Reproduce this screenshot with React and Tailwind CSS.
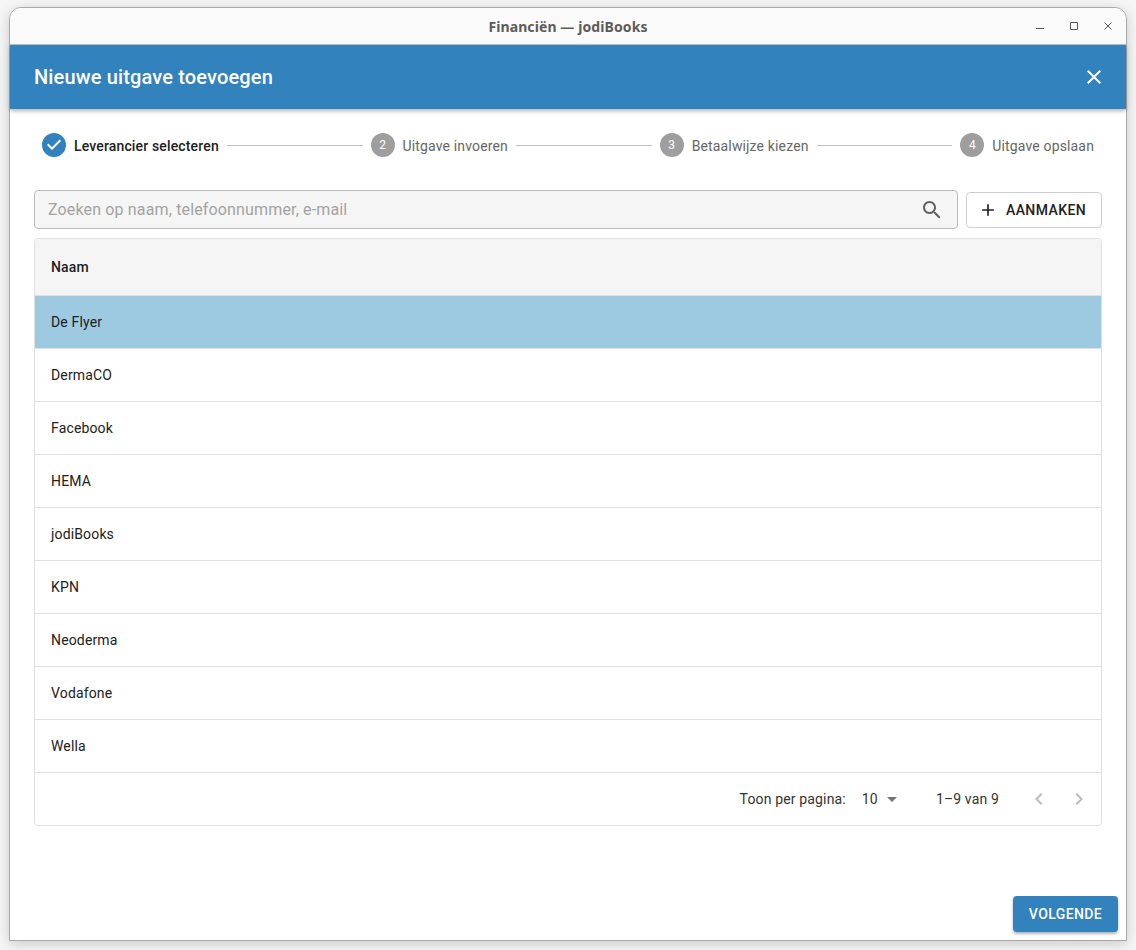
import React from 'react'

const rows = ['De Flyer', 'DermaCO', 'Facebook', 'HEMA', 'jodiBooks', 'KPN', 'Neoderma', 'Vodafone', 'Wella']
const steps = ['Uitgave invoeren', 'Betaalwijze kiezen', 'Uitgave opslaan']

function Icon({ d, size = 24, className = '' }) {
  return (
    <svg width={size} height={size} viewBox="0 0 24 24" fill="currentColor" className={className}>
      <path d={d} />
    </svg>
  )
}

const closePath = 'M19 6.41L17.59 5 12 10.59 6.41 5 5 6.41 10.59 12 5 17.59 6.41 19 12 13.41 17.59 19 19 17.59 13.41 12z'
const searchPath = 'M15.5 14h-.79l-.28-.27C15.41 12.59 16 11.11 16 9.5 16 5.91 13.09 3 9.5 3S3 5.91 3 9.5 5.91 16 9.5 16c1.61 0 3.09-.59 4.23-1.57l.27.28v.79l5 4.99L20.49 19l-4.99-5zm-6 0C7.01 14 5 11.99 5 9.5S7.01 5 9.5 5 14 7.01 14 9.5 11.99 14 9.5 14z'
const plusPath = 'M19 13h-6v6h-2v-6H5v-2h6V5h2v6h6v2z'
const leftPath = 'M15.41 7.41L14 6l-6 6 6 6 1.41-1.41L10.83 12z'
const rightPath = 'M10 6L8.59 7.41 13.17 12l-4.58 4.59L10 18l6-6z'
const donePath = 'M12 0a12 12 0 1 0 0 24 12 12 0 0 0 0-24zm-2 17l-5-5 1.4-1.4 3.6 3.6 7.6-7.6L19 8l-9 9z'

function Step({ number, label }) {
  return (
    <div className="flex items-center gap-2">
      <div className="w-6 h-6 rounded-full bg-[#9e9e9e] text-white text-xs flex items-center justify-center">{number}</div>
      <span className="text-sm tracking-[0.15px] text-[#666666] mt-[1px]">{label}</span>
    </div>
  )
}

export default function App() {
  return (
    <div className="w-[1136px] h-[950px] pt-[7px] pl-[9px] bg-[#f6f6f6] font-['Roboto',sans-serif] text-[#212121] overflow-hidden">
      {/* Window */}
      <div className="w-[1118px] h-[934px] flex flex-col bg-white border border-[#a8a8a8] rounded-t-[12px] shadow-[0_3px_14px_rgba(0,0,0,0.18)]">
        {/* Title bar */}
        <div className="relative h-[37px] shrink-0 flex items-center justify-center bg-[#fafafa] rounded-t-[12px] border-b border-[#c4c4c4]">
          <span className="font-['Noto_Sans',sans-serif] text-sm font-bold tracking-[0.1px] text-[#5e5c58] mt-[1px]">Financiën — jodiBooks</span>
          <div className="absolute right-[10px] top-[10px] flex items-center gap-[18px] text-[#555555]">
            <svg width="16" height="16" viewBox="0 0 16 16" fill="none" stroke="currentColor">
              <path d="M4 10.5h8" />
            </svg>
            <svg width="16" height="16" viewBox="0 0 16 16" fill="none" stroke="currentColor">
              <path d="M4.5 4.5h7v7h-7z" />
            </svg>
            <svg width="16" height="16" viewBox="0 0 16 16" fill="none" stroke="currentColor">
              <path d="M4.5 4.5l7 7M11.5 4.5l-7 7" />
            </svg>
          </div>
        </div>

        {/* Dialog header */}
        <div className="relative z-10 h-[64px] shrink-0 flex items-center justify-between pl-[24px] pr-[20px] bg-[#3182bd] text-white shadow-[0_2px_4px_rgba(0,0,0,0.3)]">
          <h1 className="text-xl font-medium tracking-[0.15px]">Nieuwe uitgave toevoegen</h1>
          <Icon d={closePath} />
        </div>

        <div className="flex-1 flex flex-col px-[24px]">
          {/* Stepper */}
          <div className="flex items-center px-2 mt-[24px] h-6">
            <div className="flex items-center gap-2">
              <Icon d={donePath} className="text-[#3182bd]" />
              <span className="text-sm font-medium tracking-[0.15px] text-[#212121] mt-[1px]">Leverancier selecteren</span>
            </div>
            {steps.map((label, i) => (
              <React.Fragment key={label}>
                <div className="flex-1 mx-2 border-t border-[#bdbdbd]" />
                <Step number={i + 2} label={label} />
              </React.Fragment>
            ))}
          </div>

          {/* Search + create */}
          <div className="flex items-center gap-2 mt-[33px]">
            <div className="flex-1 h-[39px] flex items-center justify-between pl-[13px] pr-[13px] bg-[#f5f5f5] border border-[#bdbdbd] rounded">
              <span className="text-base tracking-[0.15px] text-[#a3a3a3]">Zoeken op naam, telefoonnummer, e-mail</span>
              <Icon d={searchPath} className="text-[#616161]" />
            </div>
            <div className="w-[136px] h-[36px] flex items-center gap-2 pl-[11px] bg-white border border-[#cfcfcf] rounded text-sm font-medium tracking-[0.4px] text-[#212121]">
              <Icon d={plusPath} size={20} />
              AANMAKEN
            </div>
          </div>

          {/* Table */}
          <div className="mt-[9px] border border-[#e0e0e0] rounded tracking-[0.15px]">
            <div className="h-[57px] flex items-center px-4 bg-[#f5f5f5] border-b border-[#e0e0e0] rounded-t text-sm font-medium">Naam</div>
            {rows.map((name, i) => (
              <div
                key={name}
                className={i === 0
                  ? 'h-[53px] flex items-center px-4 text-sm border-b border-[#e0e0e0] bg-[#9ecae1]'
                  : 'h-[53px] flex items-center px-4 text-sm border-b border-[#e0e0e0]'}
              >
                {name}
              </div>
            ))}
            {/* Pagination */}
            <div className="h-[52px] flex items-center justify-end pr-[10px] text-sm text-[#333333]">
              <span>Toon per pagina:</span>
              <span className="ml-4 -mt-[1px]">10</span>
              <Icon d="M7 10l5 5 5-5z" className="ml-[2px] text-[#757575]" />
              <span className="ml-[32px]">1–9 van 9</span>
              <Icon d={leftPath} className="ml-[28px] text-[#bdbdbd]" />
              <Icon d={rightPath} className="ml-[16px] text-[#bdbdbd]" />
            </div>
          </div>
        </div>

        {/* Footer */}
        <div className="flex justify-end pr-[8px] pb-[8px]">
          <div className="w-[105px] h-[36px] flex items-center justify-center rounded bg-[#3182bd] text-white text-sm font-medium tracking-[0.4px] shadow-[0_2px_3px_rgba(0,0,0,0.3)]">
            VOLGENDE
          </div>
        </div>
      </div>
    </div>
  )
}
